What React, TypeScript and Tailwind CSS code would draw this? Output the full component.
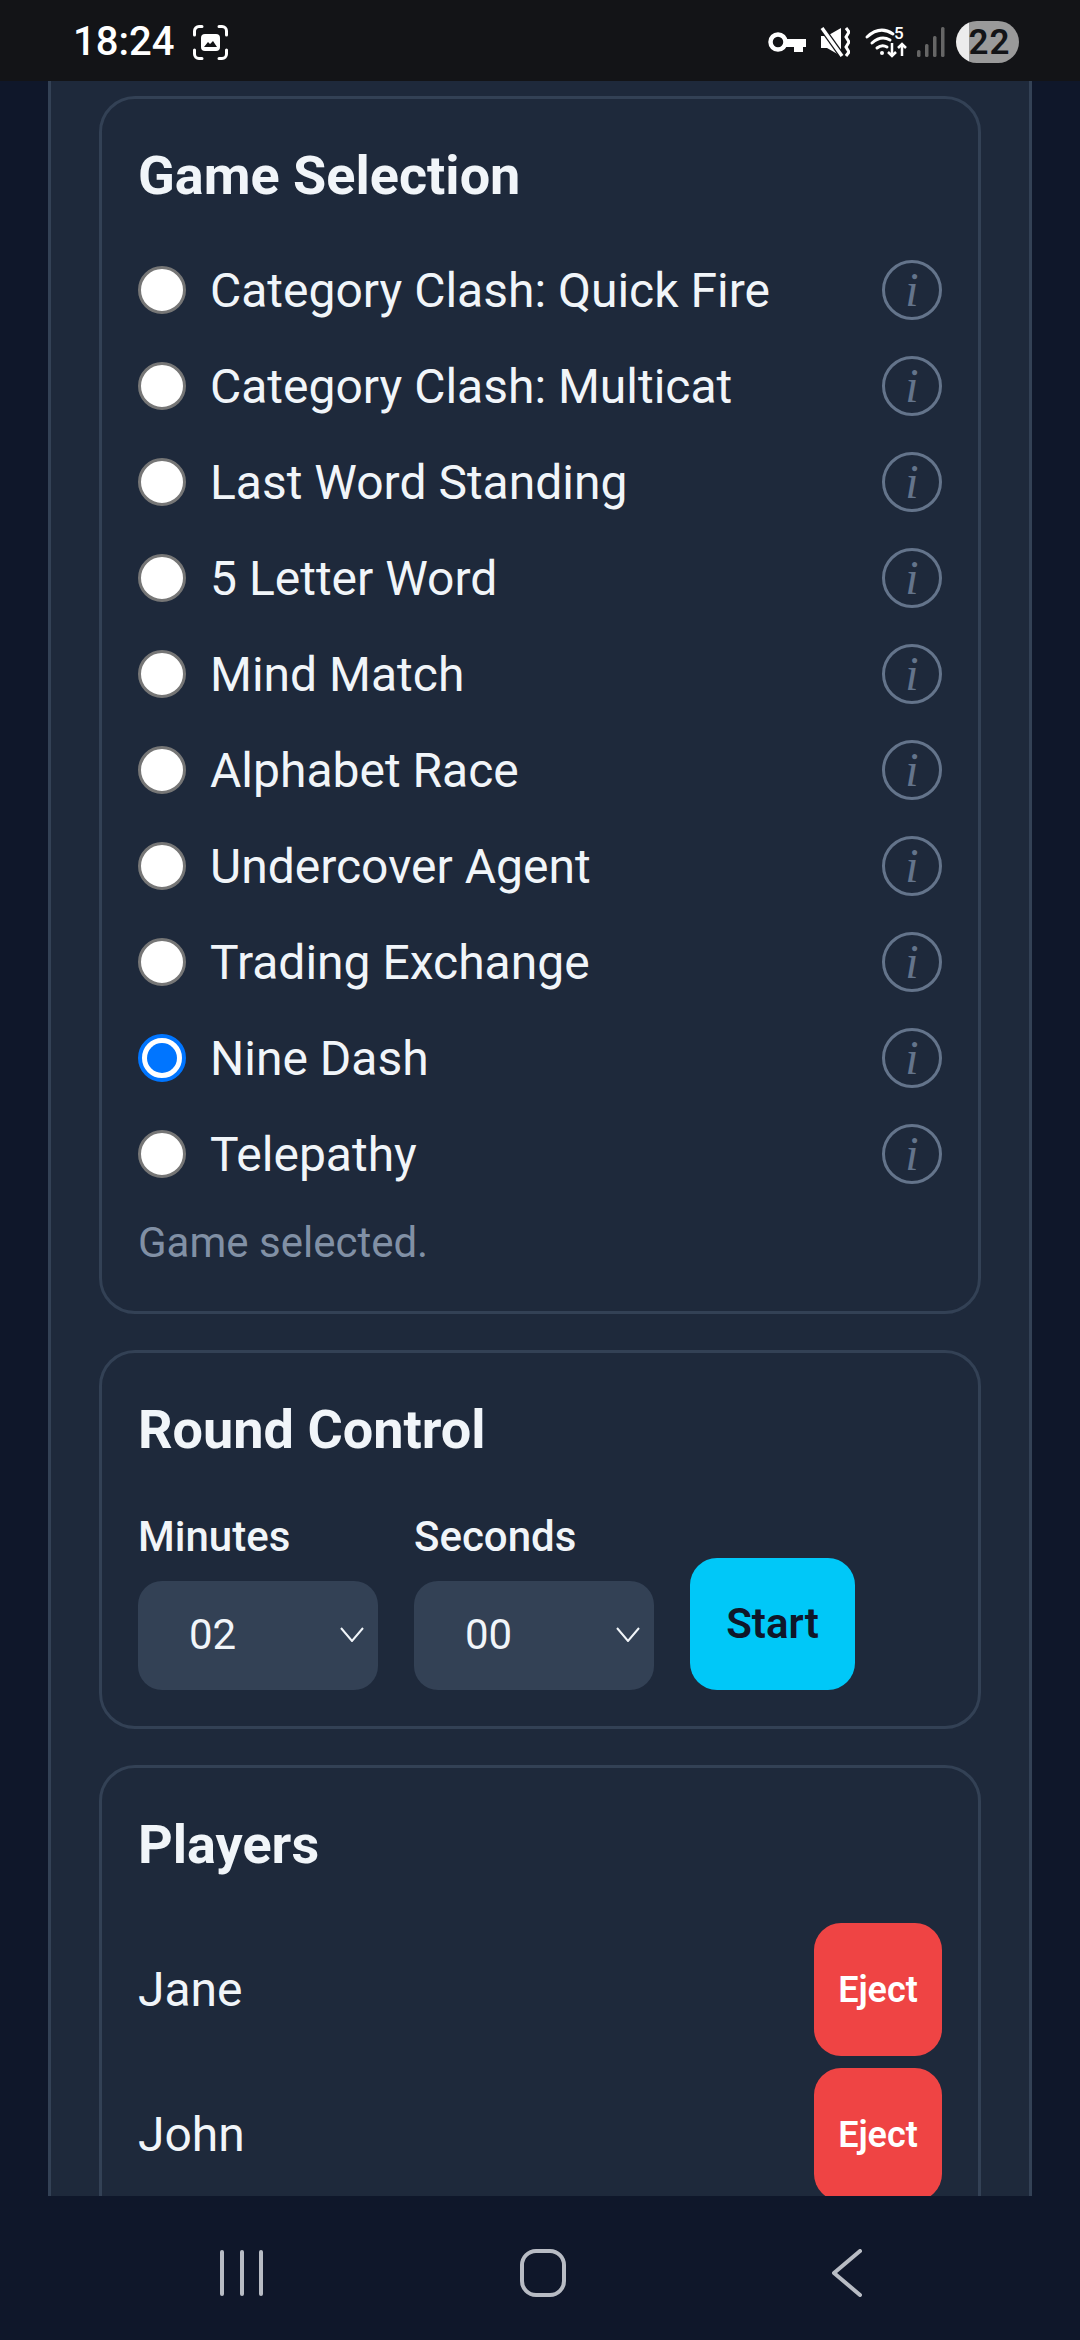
const games = [
  "Category Clash: Quick Fire",
  "Category Clash: Multicat",
  "Last Word Standing",
  "5 Letter Word",
  "Mind Match",
  "Alphabet Race",
  "Undercover Agent",
  "Trading Exchange",
  "Nine Dash",
  "Telepathy",
];

const selectedGame = "Nine Dash";
const players = ["Jane", "John"];

function StatusBar() {
  return (
    <div className="flex h-[81px] shrink-0 items-center bg-[#131417] pl-[73px] pr-[61px] pt-[3px] text-white">
      <span className="text-[40px] font-medium leading-none">18:24</span>
      <svg className="ml-[19px]" width="35" height="35" viewBox="0 0 35 35" fill="none">
        <path d="M1.500 10V6a4.500 4.500 0 0 1 4.500-4.500h3M26 1.500h3A4.500 4.500 0 0 1 33.500 6v4M33.500 25v4a4.500 4.500 0 0 1-4.500 4.500h-3M9 33.500H6A4.500 4.500 0 0 1 1.500 29v-4" stroke="white" strokeWidth="3" strokeLinecap="round" />
        <rect x="8" y="9" width="19" height="17" rx="4" fill="white" />
        <path d="M11 22l4-5 2 2 3-3 4 6z" fill="#131417" />
      </svg>
      <div className="ml-auto flex items-center">
        <svg width="38" height="20" viewBox="0 0 38 20" fill="none">
          <circle cx="10" cy="10" r="7.500" stroke="white" strokeWidth="4.500" />
          <path d="M18 7h20v8h-3v5h-9v-5h-8z" fill="white" />
        </svg>
        <svg className="ml-[14px]" width="30" height="30" viewBox="0 0 30 30" fill="none">
          <path d="M1 9h6l14-8v28L7 21H1z" fill="white" />
          <path d="M2 1l20 28" stroke="#131417" strokeWidth="6" />
          <path d="M2 1l20 28" stroke="white" strokeWidth="3.500" />
          <path d="M26 1l3 4-3 5 3 5-3 5 3 5-3 4" stroke="white" strokeWidth="3" />
        </svg>
        <svg className="ml-[16px] overflow-visible" width="42" height="32" viewBox="0 0 42 32" fill="none">
          <path d="M1 11Q14-1 27 8M6 17Q15 9 24 14M11 22q5-4 10-1" stroke="white" strokeWidth="3" strokeLinecap="round" />
          <circle cx="16" cy="27" r="2" fill="white" />
          <text x="28" y="13" fill="white" fontSize="17" fontWeight="500" fontFamily="Roboto, sans-serif">5</text>
          <path d="M26 17v13M22 26l4 4 4-4M36 30V18M32 22l4-4 4 4" stroke="white" strokeWidth="2.500" />
        </svg>
        <svg className="ml-[9px]" width="28" height="30" viewBox="0 0 28 30" fill="#666">
          <rect x="0" y="23" width="3.500" height="7" rx="1.500" />
          <rect x="8" y="17" width="3.500" height="13" rx="1.500" />
          <rect x="16" y="9" width="3.500" height="21" rx="1.500" />
          <rect x="24" y="0" width="3.500" height="30" rx="1.500" />
        </svg>
        <div className="ml-[11px] flex h-[42px] w-[63px] items-center justify-center overflow-hidden rounded-full bg-[linear-gradient(to_right,#ececec_13px,#9a9a9a_13px)] pl-[4px] text-[35px] font-semibold leading-none tracking-[1px] text-[#131417]">
          22
        </div>
      </div>
    </div>
  );
}

function InfoIcon() {
  return (
    <div className="flex h-[60px] w-[60px] shrink-0 items-center justify-center rounded-full border-[3px] border-[#64748b] font-['Liberation_Serif',serif] text-[48px] italic leading-none text-[#64748b]">
      i
    </div>
  );
}

function Radio({ checked }: { checked: boolean }) {
  if (checked) {
    return (
      <span className="flex h-[48px] w-[48px] shrink-0 items-center justify-center rounded-full border-[4px] border-[#0075ff] bg-white">
        <span className="h-[30px] w-[30px] rounded-full bg-[#0075ff]" />
      </span>
    );
  }
  return <span className="h-[48px] w-[48px] shrink-0 rounded-full border-[3px] border-[#767676] bg-white" />;
}

function Chevron() {
  return (
    <svg width="24" height="15" viewBox="0 0 24 15" fill="none">
      <path d="M1 1l11 13L23 1" stroke="#f1f5f9" strokeWidth="2" />
    </svg>
  );
}

function TimeSelect({ label, value }: { label: string; value: string }) {
  return (
    <div className="w-[240px]">
      <div className="mb-[14px] h-[60px] text-[42px] font-medium leading-[60px] text-[#f1f5f9]">{label}</div>
      <div className="flex h-[109px] items-center justify-between rounded-[24px] bg-[#334155] pb-[2px] pl-[51px] pr-[14px] text-[42px] text-[#f1f5f9]">
        <span>{value}</span>
        <Chevron />
      </div>
    </div>
  );
}

export default function App() {
  return (
    <div className="flex h-[2340px] w-[1080px] flex-col overflow-hidden bg-[#0f172a] font-['Roboto',sans-serif]">
      <StatusBar />

      <div className="min-h-0 flex-1 overflow-hidden px-[48px]">
        <div className="flex h-full flex-col gap-[36px] overflow-hidden border-x-[3px] border-[#334155] bg-[#1e293b] px-[48px] pt-[15px]">
          <section className="shrink-0 rounded-[36px] border-[3px] border-[#334155] px-[36px] pb-[38px] pt-[41px]">
            <h2 className="mb-[30px] text-[54px] font-bold leading-[72px] text-[#f1f5f9]">Game Selection</h2>
            <div className="flex flex-col">
              {games.map((game) => (
                <div key={game} className="flex h-[96px] items-center">
                  <Radio checked={game === selectedGame} />
                  <span className="ml-[24px] flex-1 pt-[2px] text-[48px] text-[#f1f5f9]">{game}</span>
                  <InfoIcon />
                </div>
              ))}
            </div>
            <p className="mt-[11px] text-[42px] leading-[60px] text-[#8190a5]">Game selected.</p>
          </section>

          <section className="shrink-0 rounded-[36px] border-[3px] border-[#334155] px-[36px] pb-[36px] pt-[41px]">
            <h2 className="mb-[41px] text-[54px] font-bold leading-[72px] text-[#f1f5f9]">Round Control</h2>
            <div className="flex items-end gap-[36px]">
              <TimeSelect label="Minutes" value="02" />
              <TimeSelect label="Seconds" value="00" />
              <button className="h-[132px] w-[165px] rounded-[27px] bg-[#00c8f8] pb-[2px] text-[42px] font-semibold text-[#0f172a]">
                Start
              </button>
            </div>
          </section>

          <section className="shrink-0 rounded-[36px] border-[3px] border-[#334155] px-[36px] pb-[36px] pt-[41px]">
            <h2 className="mb-[42px] text-[54px] font-bold leading-[72px] text-[#f1f5f9]">Players</h2>
            <div className="flex flex-col gap-[12px]">
              {players.map((player) => (
                <div key={player} className="flex items-center justify-between">
                  <span className="text-[48px] text-[#f1f5f9]">{player}</span>
                  <button className="h-[133px] w-[128px] rounded-[27px] bg-[#ef4444] text-[36px] font-semibold text-white">
                    Eject
                  </button>
                </div>
              ))}
            </div>
          </section>
        </div>
      </div>

      <div className="flex h-[144px] shrink-0 items-center gap-[257px] bg-[#0f172a] pl-[220px] pt-[10px]">
        <div className="flex h-[46px] w-[43px] justify-between">
          <span className="h-full w-[4px] rounded-full bg-[#b8bcc4]" />
          <span className="h-full w-[4px] rounded-full bg-[#b8bcc4]" />
          <span className="h-full w-[4px] rounded-full bg-[#b8bcc4]" />
        </div>
        <div className="h-[48px] w-[46px] rounded-[16px] border-[4px] border-[#b8bcc4]" />
        <svg className="ml-[9px]" width="30" height="48" viewBox="0 0 30 48" fill="none">
          <path d="M28 2L2 24l26 22" stroke="#b8bcc4" strokeWidth="4" strokeLinecap="round" strokeLinejoin="round" />
        </svg>
      </div>
    </div>
  );
}
